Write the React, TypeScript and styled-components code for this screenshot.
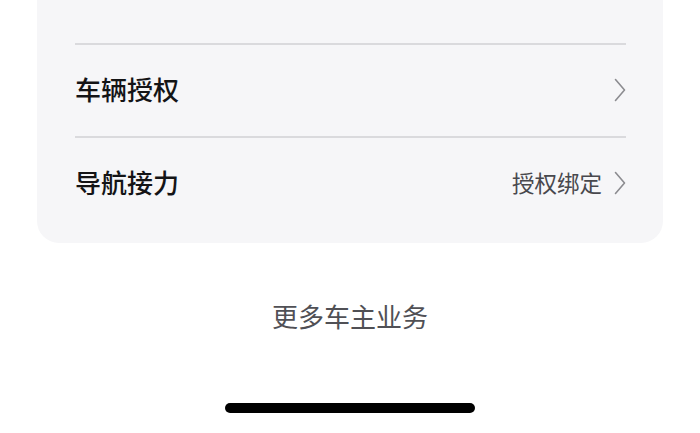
import React from "react";
import styled, {createGlobalStyle} from "styled-components";

const GlobalStyle = createGlobalStyle`
  html, body {
    margin: 0;
    padding: 0;
    background: #ffffff;
  }
  body {
    font-family: "Noto Sans CJK SC", "Noto Sans", sans-serif;
    -webkit-font-smoothing: antialiased;
  }
`;

const Page = styled.div`
  width: 700px;
  height: 433px;
  overflow: hidden;
  display: flex;
  flex-direction: column;
  align-items: center;
  background: #ffffff;
`;

const Card = styled.section`
  align-self: stretch;
  margin: 0 37px;
  padding: 43px 37px 14px 38px;
  background: #f6f6f8;
  border-radius: 0 0 22px 22px;
  display: flex;
  flex-direction: column;
`;

const Divider = styled.div`
  height: 2px;
  background: #dadadd;
`;

const Row = styled.div`
  height: 91px;
  padding-bottom: 3px;
  box-sizing: border-box;
  display: flex;
  align-items: center;
  justify-content: space-between;
`;

const Title = styled.span`
  font-size: 26px;
  font-weight: 500;
  color: #141416;
  line-height: 1;
`;

const Extra = styled.div`
  display: flex;
  align-items: center;
  gap: 12px;
`;

const Value = styled.span`
  font-size: 22.5px;
  color: #48484d;
  line-height: 1;
`;

const Chev = styled.svg`
  margin-top: 2px;
`;

const More = styled.div`
  margin-top: 55px;
  font-size: 26px;
  line-height: 35px;
  color: #505055;
`;

const HomeBar = styled.div`
  margin-top: 70px;
  width: 250px;
  height: 10px;
  border-radius: 5px;
  background: #000000;
`;

function Chevron() {
    return (
        <Chev width="12" height="24" viewBox="0 0 12 24" fill="none">
            <path d="M1.5 1.5 L10.5 12 L1.5 22.5" stroke="#8c8c90" strokeWidth="1.6"
                  strokeLinecap="round" strokeLinejoin="round"/>
        </Chev>
    );
}

interface IItem {
    title: string;
    value?: string;
}

const items: IItem[] = [
    {title: "车辆授权"},
    {title: "导航接力", value: "授权绑定"},
];

export default function App() {
    return (
        <Page>
            <GlobalStyle/>
            <Card>
                {items.map(item => (
                    <React.Fragment key={item.title}>
                        <Divider/>
                        <Row>
                            <Title>{item.title}</Title>
                            <Extra>
                                {item.value && <Value>{item.value}</Value>}
                                <Chevron/>
                            </Extra>
                        </Row>
                    </React.Fragment>
                ))}
            </Card>
            <More>更多车主业务</More>
            <HomeBar/>
        </Page>
    );
}
